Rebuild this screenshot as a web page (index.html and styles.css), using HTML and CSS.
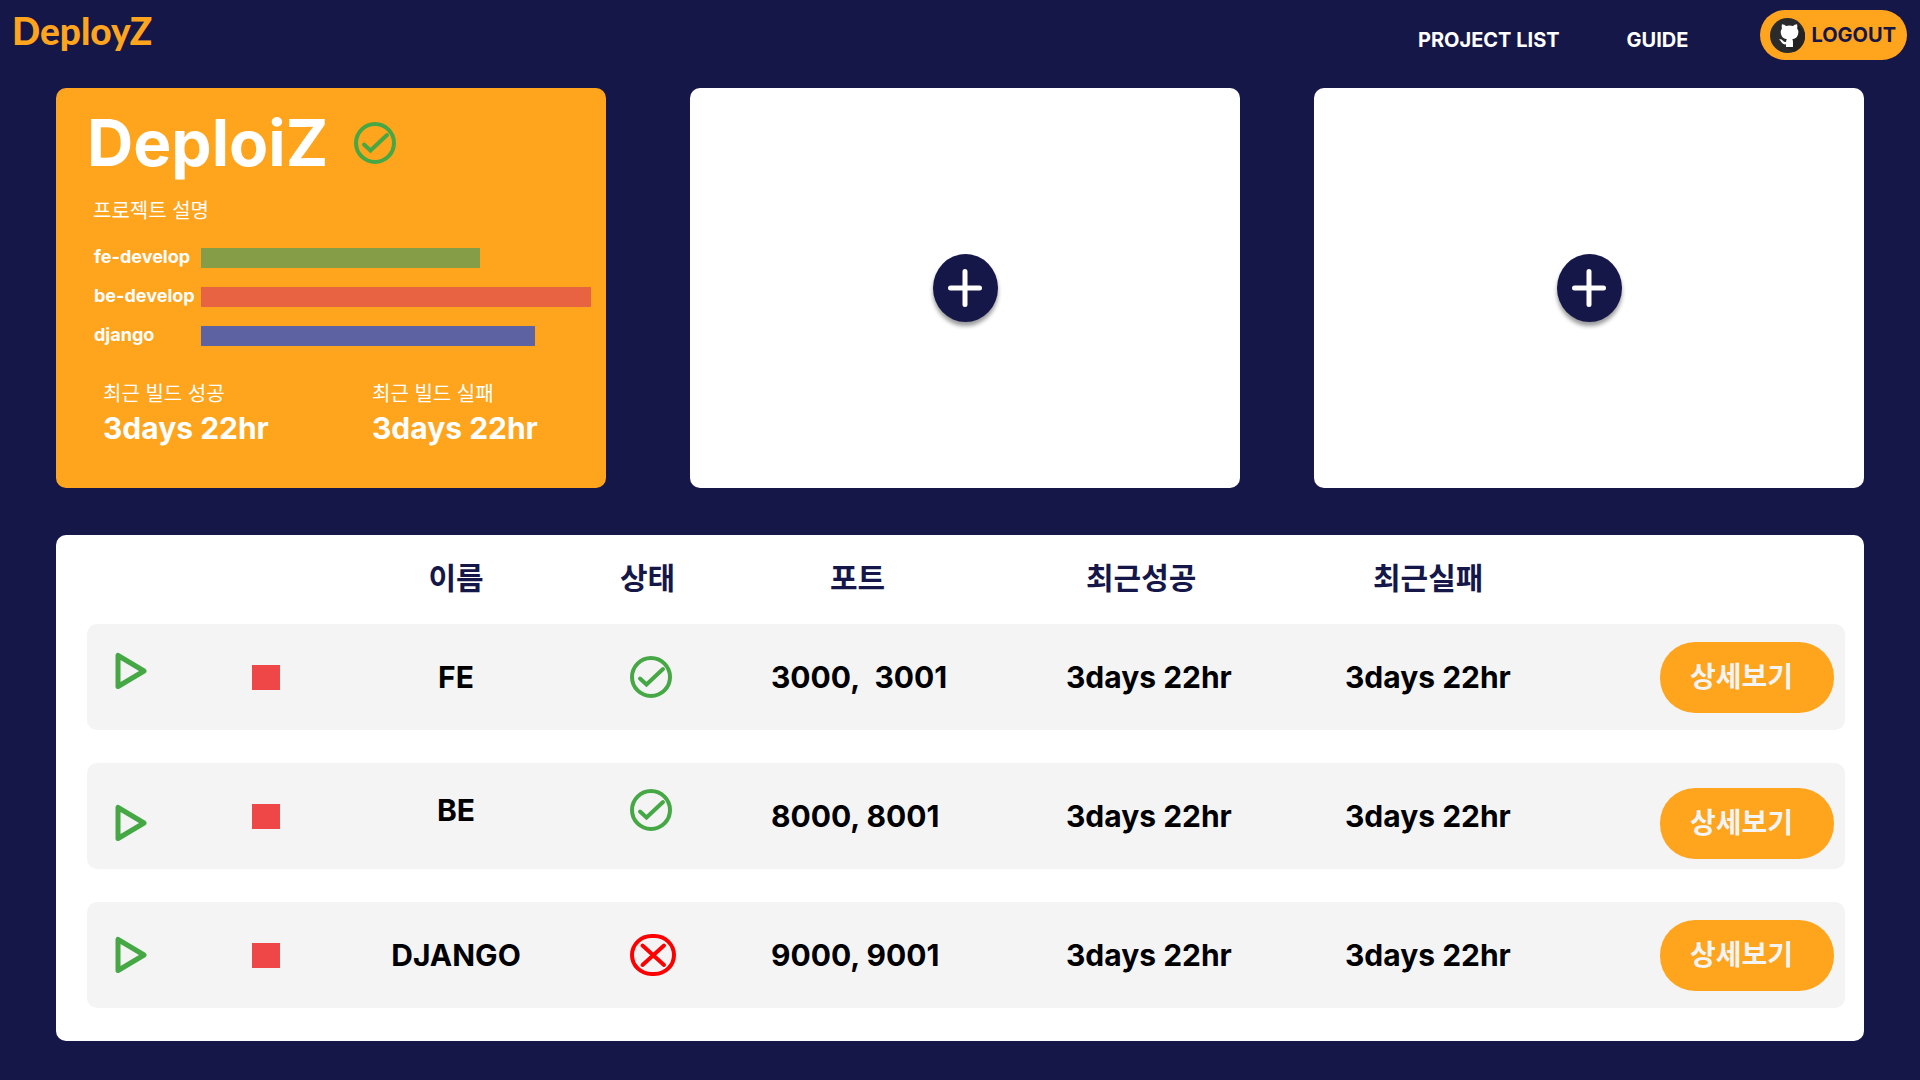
FILE: index.html
```html
<!DOCTYPE html>
<html lang="ko">
<head>
<meta charset="utf-8">
<meta name="viewport" content="width=device-width, initial-scale=1">
<title>DeployZ</title>
<link rel="stylesheet" href="styles.css">
</head>
<body>
<svg class="sprite" aria-hidden="true">
  <symbol id="icon-check" viewBox="0 0 42 42">
    <circle cx="21" cy="21" r="19" fill="none" stroke="#45a845" stroke-width="4"/>
    <path d="M10 22.5 16.5 28.500 33 13" fill="none" stroke="#45a845" stroke-width="4" stroke-linecap="round"/>
  </symbol>
  <symbol id="icon-fail" viewBox="0 0 46 42">
    <rect x="2" y="2" width="42" height="38" rx="19.500" fill="none" stroke="#f00" stroke-width="4"/>
    <path d="M12.500 11.500 34 31M34 11.500 12.500 31" fill="none" stroke="#f00" stroke-width="4" stroke-linecap="round"/>
  </symbol>
  <symbol id="icon-play" viewBox="0 0 32 38">
    <path d="M3 3.500V34.500L29 19Z" fill="none" stroke="#45a845" stroke-width="5" stroke-linejoin="round"/>
  </symbol>
  <symbol id="icon-plus" viewBox="0 0 34 38">
    <path d="M17 2.500V35.500M2.500 19H31.500" fill="none" stroke="#fff" stroke-width="5" stroke-linecap="round"/>
  </symbol>
</svg>

<header class="topbar">
  <a class="logo" href="#">DeployZ</a>
  <nav class="nav">
    <a href="#">PROJECT LIST</a>
    <a href="#">GUIDE</a>
  </nav>
  <button class="logout" type="button">
    <svg class="github" viewBox="0 0 35 35" aria-hidden="true">
      <circle cx="17.500" cy="17.500" r="17.500" fill="#2b2b2b"/>
      <path d="M28 7 35 15A17.500 17.500 0 0 1 24 34L17 29 23 22Z" fill="#222"/>
      <path d="M12 6.300Q14.500 6.500 16 8Q19.500 7.200 23 8Q24.500 6.500 27 6.300Q27.800 8.500 27.200 10.400Q28.600 12.200 28.300 15Q28 20.500 22.300 21.200Q23 22.200 23 24V29H16V26.300Q12.800 26.800 11.500 24.300Q10.700 22.500 9 21.600Q11 20.600 12.700 22.600Q14 24.600 16 23.900Q16.200 22 16.900 21.200Q11.200 20.500 10.800 15Q10.600 12.200 11.900 10.400Q11.200 8.500 12 6.300Z" fill="#fff"/>
    </svg>
    LOGOUT
  </button>
</header>

<main class="content">
  <section class="cards" aria-label="Projects">
    <article class="card project">
      <div class="project-head">
        <h1>DeploiZ</h1>
        <svg class="status" role="img" aria-label="OK"><use href="#icon-check"/></svg>
      </div>
      <p class="description">프로젝트 설명</p>
      <dl class="branches">
        <dt>fe-develop</dt><dd><div class="bar bar-fe" style="width: 70%"></div></dd>
        <dt>be-develop</dt><dd><div class="bar bar-be" style="width: 98%"></div></dd>
        <dt>django</dt><dd><div class="bar bar-django" style="width: 84%"></div></dd>
      </dl>
      <dl class="builds">
        <div><dt>최근 빌드 성공</dt><dd>3days 22hr</dd></div>
        <div><dt>최근 빌드 실패</dt><dd>3days 22hr</dd></div>
      </dl>
    </article>
    <div class="card empty">
      <button class="add" type="button" aria-label="Add project"><svg><use href="#icon-plus"/></svg></button>
    </div>
    <div class="card empty">
      <button class="add" type="button" aria-label="Add project"><svg><use href="#icon-plus"/></svg></button>
    </div>
  </section>

  <section class="panel">
    <table class="services">
      <colgroup>
        <col class="c-play"><col class="c-stop"><col class="c-name"><col class="c-status"><col class="c-port"><col class="c-success"><col class="c-fail"><col class="c-more">
      </colgroup>
      <thead>
        <tr>
          <td></td><td></td>
          <th class="name" scope="col">이름</th>
          <th scope="col">상태</th>
          <th class="port" scope="col">포트</th>
          <th class="success" scope="col">최근성공</th>
          <th class="failure" scope="col">최근실패</th>
          <td></td>
        </tr>
      </thead>
      <tbody>
        <tr>
          <td class="play high"><button type="button" aria-label="Start"><svg><use href="#icon-play"/></svg></button></td>
          <td><button class="stop" type="button" aria-label="Stop"></button></td>
          <td class="name">FE</td>
          <td class="state"><svg class="status" role="img" aria-label="OK"><use href="#icon-check"/></svg></td>
          <td>3000,&nbsp; 3001</td>
          <td>3days 22hr</td>
          <td>3days 22hr</td>
          <td><button class="more" type="button">상세보기</button></td>
        </tr>
        <tr>
          <td class="play low"><button type="button" aria-label="Start"><svg><use href="#icon-play"/></svg></button></td>
          <td><button class="stop" type="button" aria-label="Stop"></button></td>
          <td class="name high">BE</td>
          <td class="state high"><svg class="status" role="img" aria-label="OK"><use href="#icon-check"/></svg></td>
          <td>8000, 8001</td>
          <td>3days 22hr</td>
          <td>3days 22hr</td>
          <td class="low"><button class="more" type="button">상세보기</button></td>
        </tr>
        <tr>
          <td class="play"><button type="button" aria-label="Start"><svg><use href="#icon-play"/></svg></button></td>
          <td><button class="stop" type="button" aria-label="Stop"></button></td>
          <td class="name">DJANGO</td>
          <td class="state"><svg class="status status-fail" role="img" aria-label="Failed"><use href="#icon-fail"/></svg></td>
          <td>9000, 9001</td>
          <td>3days 22hr</td>
          <td>3days 22hr</td>
          <td><button class="more" type="button">상세보기</button></td>
        </tr>
      </tbody>
    </table>
  </section>
</main>
</body>
</html>
```
FILE: styles.css
```css
:root {
  --navy: #161749;
  --orange: #ffa41d;
  --row: #f4f4f4;
}

* {
  box-sizing: border-box;
}

body {
  margin: 0;
  min-height: 100vh;
  background: var(--navy);
  font-family: Inter, "Noto Sans CJK KR", sans-serif;
}

button {
  margin: 0;
  padding: 0;
  border: 0;
  background: none;
  font: inherit;
  cursor: pointer;
}

svg {
  display: block;
}

h1, p, dl, dd {
  margin: 0;
}

.sprite {
  position: absolute;
  width: 0;
  height: 0;
}

/* Top bar */
.topbar {
  display: flex;
  align-items: center;
  padding: 10px 13px 0 12px;
}

.logo {
  align-self: flex-start;
  margin-right: auto;
  color: var(--orange);
  font: 900 37px/42px Lato, sans-serif;
  text-decoration: none;
}

.nav {
  display: flex;
  gap: 67px;
  padding-top: 10px;
}

.nav a {
  color: #fff;
  font-size: 20px;
  font-weight: 700;
  line-height: 24px;
  text-decoration: none;
}

.logout {
  display: flex;
  align-items: center;
  gap: 6px;
  height: 50px;
  margin-left: 72px;
  padding: 0 11px 0 10px;
  border-radius: 25px;
  background: var(--orange);
  color: var(--navy);
  font-size: 20px;
  font-weight: 700;
}

.github {
  width: 35px;
  height: 35px;
}

/* Project cards */
.content {
  padding: 28px 56px 39px;
}

.cards {
  display: grid;
  grid-template-columns: 1fr 84px 1fr 74px 1fr;
}

.card {
  min-height: 400px;
  border-radius: 10px;
  background: #fff;
}

.card:nth-child(2) {
  grid-column: 3;
}

.card:nth-child(3) {
  grid-column: 5;
}

.project {
  padding: 16px 0 0 31px;
  background: var(--orange);
  color: #fff;
}

.project-head {
  display: flex;
  align-items: center;
  gap: 26px;
}

.project-head h1 {
  font-size: 64px;
  font-weight: 700;
  line-height: 78px;
}

.status {
  width: 42px;
  height: 42px;
}

.status-fail {
  width: 46px;
}

.description {
  margin: 17px 6px 0;
  font-size: 20px;
  font-weight: 400;
  line-height: 24px;
}

.branches {
  display: grid;
  grid-template-columns: 107px 1fr;
  row-gap: 19px;
  margin: 25px 7px 0 7px;
}

.branches dt {
  font-size: 18px;
  font-weight: 700;
  line-height: 18px;
}

.bar {
  height: 20px;
}

.bar-fe {
  background: #849d46;
}

.bar-be {
  background: #e86342;
}

.bar-django {
  background: #5d62a3;
}

.builds {
  display: grid;
  grid-template-columns: 269px 1fr;
  margin: 36px 0 0 16px;
}

.builds dt {
  font-size: 20px;
  font-weight: 400;
  line-height: 24px;
}

.builds dd {
  font-size: 30px;
  font-weight: 700;
  line-height: 36px;
  margin-top: 4px;
}

.empty {
  display: flex;
  align-items: center;
  justify-content: center;
}

.add {
  display: flex;
  align-items: center;
  justify-content: center;
  width: 65px;
  height: 68px;
  border-radius: 50%;
  background: var(--navy);
  box-shadow: 0 4px 4px rgba(0, 0, 0, 0.4);
}

.add svg {
  width: 34px;
  height: 38px;
}

/* Services table */
.panel {
  margin-top: 47px;
  padding: 0 19px 0 31px;
  border-radius: 10px;
  background: #fff;
}

.services {
  width: 100%;
  table-layout: fixed;
  border-spacing: 0 33px;
  font-size: 30px;
  font-weight: 700;
  line-height: 36px;
  text-align: left;
}

.c-play { width: 165px; }
.c-stop { width: 40px; }
.c-name { width: 328px; }
.c-status { width: 151px; }
.c-port { width: 295px; }
.c-success { width: 279px; }
.c-fail { width: 315px; }
.c-more { width: 185px; }

.services th,
.services td {
  padding: 0;
  white-space: nowrap;
}

.services th {
  color: var(--navy);
  line-height: 21px;
  padding-bottom: 2px;
}

.services .name {
  text-align: center;
}

.services .port {
  padding-left: 59px;
}

.services .success {
  padding-left: 20px;
}

.services .failure {
  padding-left: 28px;
}

.services tbody td {
  height: 106px;
  background: var(--row);
}

.services tbody td:first-child {
  border-radius: 10px 0 0 10px;
}

.services tbody td:last-child {
  border-radius: 0 10px 10px 0;
}

.services .high {
  padding-bottom: 12px;
}

.services .low {
  padding-top: 14px;
}

.services .play {
  padding-left: 28px;
}

.services .state {
  padding-left: 10px;
}

.play button,
.stop {
  display: block;
}

.play svg {
  width: 32px;
  height: 38px;
}

.stop {
  width: 28px;
  height: 25px;
  background: #ef4747;
}

.more {
  display: block;
  height: 71px;
  padding: 0 41px 0 30px;
  border-radius: 35px;
  background: var(--orange);
  color: var(--row);
  font-size: 28px;
  font-weight: 600;
}
```
